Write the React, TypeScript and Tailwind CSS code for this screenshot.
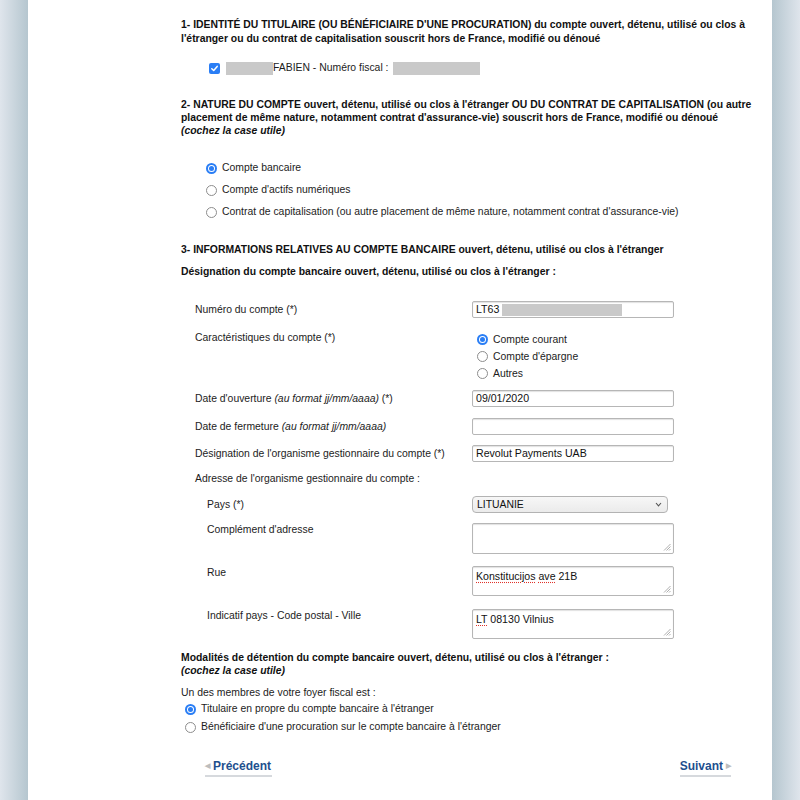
import { ReactNode } from 'react';

// Native-looking form controls, drawn by hand so they render the same everywhere

const Radio = ({ checked }: { checked?: boolean }) =>
    checked ? (
        <span className="w-[11px] h-[11px] rounded-full bg-[#2a7ef5] flex items-center justify-center shrink-0">
            <span className="w-[7px] h-[7px] rounded-full bg-white flex items-center justify-center">
                <span className="w-[5px] h-[5px] rounded-full bg-[#2a7ef5]" />
            </span>
        </span>
    ) : (
        <span className="w-[11px] h-[11px] rounded-full border border-[#8d8d8d] bg-white shrink-0" />
    );

const Checkbox = () => (
    <span className="w-[11px] h-[11px] rounded-[2px] bg-[#2a7ef5] flex items-center justify-center shrink-0">
        <svg width="9" height="9" viewBox="0 0 9 9" fill="none">
            <path d="M1.8 4.7 L3.7 6.5 L7.2 2.4" stroke="white" strokeWidth="1.5" strokeLinecap="round" strokeLinejoin="round" />
        </svg>
    </span>
);

const Redacted = ({ w }: { w: number }) => (
    <span className="inline-block h-[13px] bg-[#c9c9c9]" style={{ width: w }} />
);

const TextInput = ({ children }: { children?: ReactNode }) => (
    <div className="w-[202px] h-[17px] border border-[#b6b6b6] rounded-[2px] bg-white shadow-[inset_0_1px_1px_rgba(0,0,0,0.12)] flex items-center pl-[3px] text-[10.6px] text-[#111]">
        {children}
    </div>
);

const Grip = () => (
    <svg className="absolute right-[2px] bottom-[2px]" width="8" height="8" viewBox="0 0 8 8">
        <path d="M7.5 1 L1 7.5 M7.5 3.5 L3.5 7.5 M7.5 6 L6 7.5" stroke="#9a9a9a" strokeWidth="0.8" />
    </svg>
);

const TextArea = ({ h, children }: { h: string; children?: ReactNode }) => (
    <div className={`relative w-[202px] ${h} border border-[#b6b6b6] rounded-[2px] bg-white shadow-[inset_0_1px_1px_rgba(0,0,0,0.12)] pl-[3px] pt-[3px] leading-[13px] text-[10.6px] text-[#111]`}>
        {children}
        <Grip />
    </div>
);

const Spell = ({ children }: { children: ReactNode }) => (
    <span className="underline decoration-dotted decoration-[#e0322a] underline-offset-2">{children}</span>
);

const Row = ({ label, children, sub, top }: { label: ReactNode; children: ReactNode; sub?: boolean; top?: string }) => (
    <div className={`flex ${top ?? ''}`}>
        <div className={`${sub ? 'pl-[26px] w-[291px]' : 'pl-[14px] w-[291px]'} leading-[17px]`}>{label}</div>
        {children}
    </div>
);

const App = () => {
    return (
        <div className="flex min-h-[800px] font-['Liberation_Sans',Arial,sans-serif] text-[10.4px] text-[#1c1c1c]">
            <div className="w-[28px] bg-gradient-to-r from-[#dfe5ec] to-[#b5c6cf]" />

            <div className="flex-1 bg-white pl-[153px]">
                <div className="mt-[18px] font-bold leading-[14px] text-[#111] whitespace-nowrap">
                    1- IDENTITÉ DU TITULAIRE (OU BÉNÉFICIAIRE D'UNE PROCURATION) du compte ouvert, détenu, utilisé ou clos à<br />
                    l'étranger ou du contrat de capitalisation souscrit hors de France, modifié ou dénoué
                </div>

                <div className="mt-[14px] h-[16px] flex items-center pl-[28px]">
                    <Checkbox />
                    <span className="w-[6px]" />
                    <Redacted w={47} />
                    <span>FABIEN - Numéro fiscal :</span>
                    <span className="w-[5px]" />
                    <Redacted w={87} />
                </div>

                <div className="mt-[22px] font-bold leading-[13px] text-[#111] whitespace-nowrap">
                    2- NATURE DU COMPTE ouvert, détenu, utilisé ou clos à l'étranger OU DU CONTRAT DE CAPITALISATION (ou autre<br />
                    placement de même nature, notamment contrat d'assurance-vie) souscrit hors de France, modifié ou dénoué<br />
                    <i>(cochez la case utile)</i>
                </div>

                <div className="mt-[20px] pl-[25px]">
                    {[
                        ['Compte bancaire', true],
                        ["Compte d'actifs numériques", false],
                        ["Contrat de capitalisation (ou autre placement de même nature, notamment contrat d'assurance-vie)", false],
                    ].map(([t, c]) => (
                        <div key={t as string} className="h-[22px] flex items-center gap-[5px]">
                            <Radio checked={c as boolean} />
                            <span>{t}</span>
                        </div>
                    ))}
                </div>

                <div className="mt-[20px] font-bold leading-[14px] text-[#111]">
                    3- INFORMATIONS RELATIVES AU COMPTE BANCAIRE ouvert, détenu, utilisé ou clos à l'étranger
                </div>
                <div className="mt-[8px] font-bold leading-[14px] text-[#111]">
                    Désignation du compte bancaire ouvert, détenu, utilisé ou clos à l'étranger :
                </div>

                <Row label="Numéro du compte (*)" top="mt-[22px]">
                    <TextInput>
                        LT63<span className="w-[3px]" /><span className="inline-block w-[120px] h-[12px] bg-[#c9c9c9]" />
                    </TextInput>
                </Row>

                <div className="flex mt-[13px]">
                    <div className="pl-[14px] w-[291px] leading-[13px]">Caractéristiques du compte (*)</div>
                    <div className="pl-[5px]">
                        {[
                            ['Compte courant', true],
                            ["Compte d'épargne", false],
                            ['Autres', false],
                        ].map(([t, c]) => (
                            <div key={t as string} className="h-[17px] flex items-center gap-[5px]">
                                <Radio checked={c as boolean} />
                                <span>{t}</span>
                            </div>
                        ))}
                    </div>
                </div>

                <Row label={<>Date d'ouverture <i>(au format jj/mm/aaaa)</i> (*)</>} top="mt-[8px]">
                    <TextInput>09/01/2020</TextInput>
                </Row>

                <Row label={<>Date de fermeture <i>(au format jj/mm/aaaa)</i></>} top="mt-[11px]">
                    <TextInput />
                </Row>

                <Row label="Désignation de l'organisme gestionnaire du compte (*)" top="mt-[10px]">
                    <TextInput>Revolut Payments UAB</TextInput>
                </Row>

                <div className="mt-[10px] pl-[14px] leading-[14px]">Adresse de l'organisme gestionnaire du compte :</div>

                <Row label="Pays (*)" sub top="mt-[10px]">
                    <div className="w-[196px] h-[17px] border border-[#b3b3b3] rounded-[4px] bg-gradient-to-b from-[#f7f7f7] to-[#ebebeb] flex items-center justify-between pl-[4px] pr-[5px] text-[10.4px] text-[#111]">
                        <span>LITUANIE</span>
                        <svg width="7" height="5" viewBox="0 0 7 5">
                            <path d="M1 1 L3.5 3.8 L6 1" stroke="#555" strokeWidth="1.1" fill="none" />
                        </svg>
                    </div>
                </Row>

                <div className="flex mt-[10px]">
                    <div className="pl-[26px] w-[291px] leading-[14px]">Complément d'adresse</div>
                    <TextArea h="h-[31px]" />
                </div>

                <div className="flex mt-[12px]">
                    <div className="pl-[26px] w-[291px] leading-[13px]">Rue</div>
                    <TextArea h="h-[30px]">
                        <Spell>Konstitucijos</Spell> <Spell>ave</Spell> 21B
                    </TextArea>
                </div>

                <div className="flex mt-[13px]">
                    <div className="pl-[26px] w-[291px] leading-[13px]">Indicatif pays - Code postal - Ville</div>
                    <TextArea h="h-[30px]">
                        <Spell>LT</Spell> 08130 Vilnius
                    </TextArea>
                </div>

                <div className="mt-[12px] font-bold leading-[13px] text-[#111]">
                    Modalités de détention du compte bancaire ouvert, détenu, utilisé ou clos à l'étranger :<br />
                    <i>(cochez la case utile)</i>
                </div>

                <div className="mt-[9px] leading-[14px]">Un des membres de votre foyer fiscal est :</div>
                <div className="pl-[4px]">
                    <div className="h-[18px] flex items-center gap-[5px]">
                        <Radio checked />
                        <span>Titulaire en propre du compte bancaire à l'étranger</span>
                    </div>
                    <div className="h-[18px] flex items-center gap-[5px]">
                        <Radio />
                        <span>Bénéficiaire d'une procuration sur le compte bancaire à l'étranger</span>
                    </div>
                </div>

                <div className="mt-[22px] flex justify-between w-[550px] pl-[24px] text-[12px] font-bold text-[#1e4f8e]">
                    <span className="flex items-center gap-[3px] h-[16px] border-b-2 border-[#d6d9dd] pb-[1px] box-content pr-[1px]">
                        <span className="text-[7px] text-[#bdbdbd]">◀</span>
                        Précédent
                    </span>
                    <span className="flex items-center gap-[3px] h-[16px] border-b-2 border-[#d6d9dd] pb-[1px] box-content">
                        Suivant
                        <span className="text-[7px] text-[#bdbdbd]">▶</span>
                    </span>
                </div>
            </div>

            <div className="w-[28px] bg-gradient-to-r from-[#b5c6cf] to-[#dfe5ec]" />
        </div>
    );
};

export default App;
